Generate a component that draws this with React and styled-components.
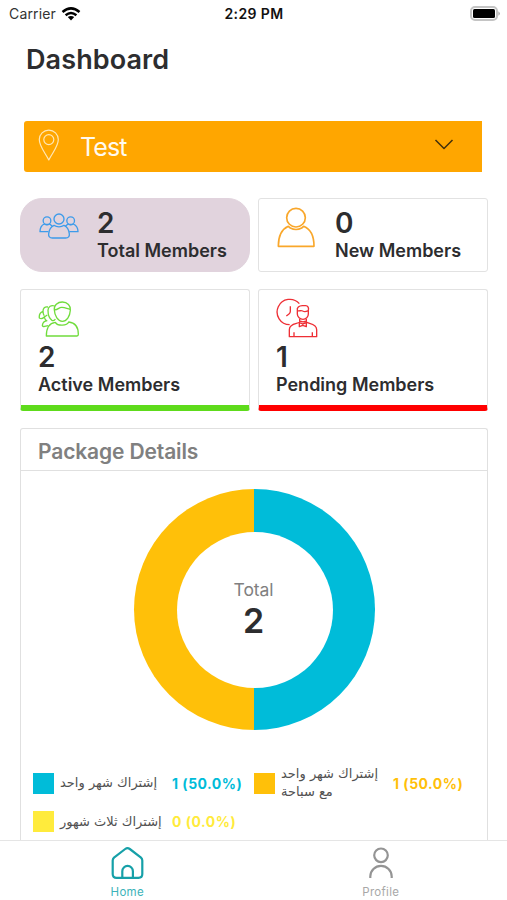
import styled, { createGlobalStyle } from "styled-components";

const legend = [
  { label: "إشتراك شهر واحد", value: "1 (50.0%)", color: "#00bcd9" },
  { label: "إشتراك شهر واحد مع سباحة", value: "1 (50.0%)", color: "#ffc009" },
  { label: "إشتراك ثلاث شهور", value: "0 (0.0%)", color: "#ffeb3c" },
];

const TotalIcon = () => (
  <Icon width="42" height="28" viewBox="84 304 126 84" stroke="#3d9bea" strokeWidth="4">
    <circle cx="147" cy="325" r="15" />
    <path d="M127 382c-8 0-12-5-11-12 1-13 7-22 16-26 8 6 22 6 30 0 9 4 15 13 16 26 1 7-3 12-11 12z" />
    <circle cx="111" cy="330" r="11.5" />
    <circle cx="182" cy="330" r="11.5" />
    <path d="M115 363H90c0-11 4-19 13-23 5 3 11 3 16 0l8 7M178 363h26c0-11-5-19-14-23-5 3-11 3-16 0l-8 7" />
  </Icon>
);

const NewIcon = () => (
  <Icon width="40" height="42" viewBox="80 286 120 126" stroke="#f9a72b" strokeWidth="5">
    <circle cx="140" cy="321" r="28" />
    <path d="M87 407h107c0-33-13-53-31-60l-6 5q-17 9-34 0l-6-5c-18 8-30 29-30 60z" />
  </Icon>
);

const ActiveIcon = () => (
  <Icon width="42" height="38" viewBox="84 58 126 114" stroke="#70dc3c" strokeWidth="4">
    <path d="M133 88c-2-14 10-24 24-24 15 0 26 11 24 25-1 18-11 33-24 33s-23-16-24-34z" />
    <path d="M134 87c8 2 13-8 22-7 10 1 15 4 25 6" />
    <path d="M109 166h92q4 0 4-5c0-20-9-35-29-37-5 12-33 13-40 1-17 2-27 16-27 41z" />
    <path d="M134 76c-10-4-20 2-20 13 0 14 4 25 12 30 4 2 8 0 10-4M114 79c-10-2-15 4-15 13-8 3-12 12-11 20 4 3 11 1 15-3 1 6 3 10 8 12M99 92c0 6 1 10 4 13M112 103l-9 6M112 120c-10 1-14 6-15 14q0 5 7 3l11-2" />
  </Icon>
);

const PendingIcon = () => (
  <Icon width="42" height="40" viewBox="78 54 126 120" stroke="#ee2f35" strokeWidth="4">
    <path d="M148 71a38 38 0 1 0-29 63" />
    <path d="M121 79v15q0 5-4 8l-8 6" />
    <path d="M142 91c-2-8 5-14 15-14h10c7 0 10 7 8 14v11c0 9-7 16-16 16s-17-7-17-16zM142 92c8 2 10-2 16 1 7 4 10 2 17-1" />
    <path d="M149 117v9c-4 6-31 2-31 23v21h82v-21c0-20-26-17-31-23v-9M148 122q11 7 22 0M148 128l10 4 11-4v12l-11-4-10 4zM132 170v-13M187 170v-13" />
  </Icon>
);

const cards = [
  { count: 2, label: "Total Members", icon: <TotalIcon />, selected: true, top: 13 },
  { count: 0, label: "New Members", icon: <NewIcon />, top: 7 },
];

const tallCards = [
  { count: 2, label: "Active Members", icon: <ActiveIcon />, color: "#5edb1b", top: 10 },
  { count: 1, label: "Pending Members", icon: <PendingIcon />, color: "#ff0000", top: 8 },
];

function App() {
  return (
    <>
      <GlobalStyle />
      <Page>
        <StatusBar>
          <Carrier>
            Carrier
            <svg width="20" height="14" viewBox="0 0 20 14" fill="none" stroke="#000" strokeWidth="2.5">
              <path d="M1.5 5Q10-2.2 18.5 5M4.6 8.2q5.4-4.5 10.8 0" />
              <path d="M6.8 10.1q3.2-2.4 6.4 0L10 13.4z" fill="#000" stroke="none" />
            </svg>
          </Carrier>
          <Time>2:29 PM</Time>
          <Battery width="31" height="15" viewBox="0 0 31 15">
            <rect x="1" y="1" width="26" height="13" rx="4" fill="#fff" stroke="#c4c4c4" strokeWidth="2" />
            <rect x="3" y="3" width="22" height="9" rx="1.5" />
            <path d="M28.4 5.2q3 2.3 0 4.6z" fill="#aaa" />
          </Battery>
        </StatusBar>
        <Title>Dashboard</Title>
        <Select>
          <Icon width="22" height="32" viewBox="0 0 22 32" stroke="#ffe7b5" strokeWidth="1.2">
            <path d="M10.8 31C7.5 24 1.3 17.8 1.3 10.6a9.5 9.5 0 0 1 19 0C20.3 17.8 14.1 24 10.8 31z" />
            <circle cx="10.8" cy="10.6" r="5" />
          </Icon>
          <span>Test</span>
          <Icon width="20" height="12" viewBox="0 0 20 12" stroke="#42300c" strokeWidth="1.5">
            <path d="M1.5 1l8.5 8.5 8.5-8.5" />
          </Icon>
        </Select>
        <Cards>
          {cards.map((card) => (
            <Card key={card.label} $selected={card.selected}>
              <IconBox $top={card.top}>{card.icon}</IconBox>
              <div>
                <Count>{card.count}</Count>
                <Label>{card.label}</Label>
              </div>
            </Card>
          ))}
          {tallCards.map((card) => (
            <TallCard key={card.label} $color={card.color}>
              <TallIcon $top={card.top}>{card.icon}</TallIcon>
              <Count>{card.count}</Count>
              <Label>{card.label}</Label>
            </TallCard>
          ))}
        </Cards>
        <Package>
          <PackageTitle>Package Details</PackageTitle>
          <Donut>
            <Hole>
              <TotalText>Total</TotalText>
              <TotalCount>2</TotalCount>
            </Hole>
          </Donut>
          <Legend>
            {legend.map((item) => (
              <LegendItem key={item.label}>
                <Swatch $color={item.color} />
                <Arabic dir="rtl">{item.label}</Arabic>
                <Percent $color={item.color}>{item.value}</Percent>
              </LegendItem>
            ))}
          </Legend>
        </Package>
        <Nav>
          <NavItem $color="#3bb3b9">
            <Icon width="33" height="32" viewBox="0 0 33 32" stroke="#16a0a8" strokeWidth="2.2">
              <path d="M1.7 13.5q0-1.7 1.3-2.9L14.2 2q2.3-1.7 4.6 0L30 10.6q1.3 1.2 1.3 2.9V27q0 3.8-3.8 3.8h-22Q1.7 30.8 1.7 27z" />
              <path d="M11.3 30.5v-6.3a5.3 5.3 0 0 1 10.6 0v6.3" />
            </Icon>
            Home
          </NavItem>
          <NavItem $color="#a8a8a8">
            <Icon width="26" height="32" viewBox="0 0 26 32" stroke="#949494" strokeWidth="2.2">
              <circle cx="13" cy="8.3" r="6.8" />
              <path d="M2.3 31v-1.5a10.7 10.7 0 0 1 21.4 0V31" />
            </Icon>
            Profile
          </NavItem>
        </Nav>
      </Page>
    </>
  );
}

const GlobalStyle = createGlobalStyle`
  * {
    box-sizing: border-box;
  }
  body {
    margin: 0;
    background: #fff;
    font-family: Inter, "Liberation Sans", sans-serif;
    color: #2d2d2f;
  }
`;

const Page = styled.div`
  width: 507px;
  height: 900px;
  overflow: hidden;
  display: flex;
  flex-direction: column;
`;

const Icon = styled.svg`
  display: block;
  flex: none;
  fill: none;
  stroke-linejoin: round;
`;

const StatusBar = styled.div`
  display: grid;
  grid-template-columns: 1fr auto 1fr;
  align-items: center;
  height: 27px;
  flex: none;
  padding: 0 6px 0 9px;
  font-size: 14px;
  color: #111;
`;

const Carrier = styled.div`
  display: flex;
  align-items: center;
  gap: 5px;
  letter-spacing: 0.15px;
  color: #333;
`;

const Time = styled.div`
  font-weight: 600;
  letter-spacing: 0.4px;
  margin-right: 2px;
`;

const Battery = styled.svg`
  justify-self: end;
`;

const Title = styled.h1`
  margin: 15px 0 0 26px;
  height: 36px;
  line-height: 36px;
  font-size: 27px;
  font-weight: 600;
  letter-spacing: 0.1px;
`;

const Select = styled.div`
  display: flex;
  align-items: center;
  flex: none;
  width: 458px;
  height: 51px;
  margin: 43px 0 0 24px;
  padding: 0 28px 3px 14px;
  border-radius: 3px 0 0 3px;
  background: #ffa600;
  color: #fffaf0;
  font-size: 25px;
  span {
    flex: 1;
    padding: 3px 0 0 20px;
    letter-spacing: -0.9px;
  }
`;

const Cards = styled.div`
  display: grid;
  grid-template-columns: 230px 230px;
  grid-template-rows: 74px 122px;
  gap: 17px 8px;
  margin: 26px 0 0 20px;
`;

const Card = styled.div`
  display: flex;
  border: 1px solid ${(props) => (props.$selected ? "#e1d3dd" : "#e2e2e2")};
  border-radius: ${(props) => (props.$selected ? "22px" : "3px")};
  background: ${(props) => (props.$selected ? "#e1d3dd" : "#fff")};
  padding: 9px 0 0 17px;
`;

const IconBox = styled.div`
  width: 59px;
  margin-top: ${(props) => props.$top - 9}px;
`;

const TallCard = styled.div`
  border: 1px solid #e2e2e2;
  border-bottom: 6px solid ${(props) => props.$color};
  border-radius: 3px;
  padding-left: 17px;
`;

const TallIcon = styled.div`
  height: 52px;
  padding-top: ${(props) => props.$top}px;
`;

const Count = styled.div`
  height: 31px;
  line-height: 31px;
  font-size: 28px;
  font-weight: 600;
`;

const Label = styled.div`
  height: 24px;
  line-height: 24px;
  font-size: 18px;
  font-weight: 600;
  white-space: nowrap;
`;

const Package = styled.div`
  flex: 1;
  min-height: 0;
  margin: 17px 19px 0 20px;
  border: 1px solid #e0e0e0;
  border-bottom: 0;
  border-radius: 3px 3px 0 0;
`;

const PackageTitle = styled.h2`
  margin: 0;
  height: 42px;
  padding: 2px 0 0 17px;
  border-bottom: 1px solid #e0e0e0;
  line-height: 42px;
  font-size: 21px;
  font-weight: 600;
  letter-spacing: -0.13px;
  color: #808080;
`;

const Donut = styled.div`
  display: grid;
  place-items: center;
  width: 241px;
  height: 241px;
  margin: 18px 0 0 113px;
  border-radius: 50%;
  background: linear-gradient(90deg, #ffc009 50%, #00bcd9 50%);
`;

const Hole = styled.div`
  width: 156px;
  height: 156px;
  border-radius: 50%;
  background: #fff;
  text-align: center;
  padding: 47px 2px 0 0;
`;

const TotalText = styled.div`
  height: 22px;
  line-height: 22px;
  font-size: 17.5px;
  letter-spacing: -0.1px;
  color: #808080;
`;

const TotalCount = styled.div`
  height: 40px;
  line-height: 40px;
  font-size: 34px;
  font-weight: 600;
`;

const Legend = styled.div`
  display: grid;
  grid-template-columns: 221px 221px;
  grid-template-rows: 40px 37px;
  margin: 33px 0 0 12px;
`;

const LegendItem = styled.div`
  display: grid;
  grid-template-columns: 21px 106px 74px;
  column-gap: 6px;
  align-items: center;
`;

const Swatch = styled.div`
  width: 21px;
  height: 21px;
  background: ${(props) => props.$color};
`;

const Arabic = styled.div`
  line-height: 18px;
  font-family: "DejaVu Sans", sans-serif;
  font-size: 13px;
  text-align: left;
  color: #505050;
`;

const Percent = styled.div`
  font-size: 14px;
  font-weight: 700;
  letter-spacing: 0.5px;
  white-space: nowrap;
  color: ${(props) => props.$color};
`;

const Nav = styled.nav`
  display: grid;
  grid-template-columns: 1fr 1fr;
  flex: none;
  height: 60px;
  border-top: 1px solid #e5e5e5;
`;

const NavItem = styled.div`
  display: flex;
  flex-direction: column;
  align-items: center;
  gap: 6px;
  padding: 6px 0 0 1px;
  font-size: 11.5px;
  letter-spacing: 0.3px;
  color: ${(props) => props.$color};
`;

export default App;
